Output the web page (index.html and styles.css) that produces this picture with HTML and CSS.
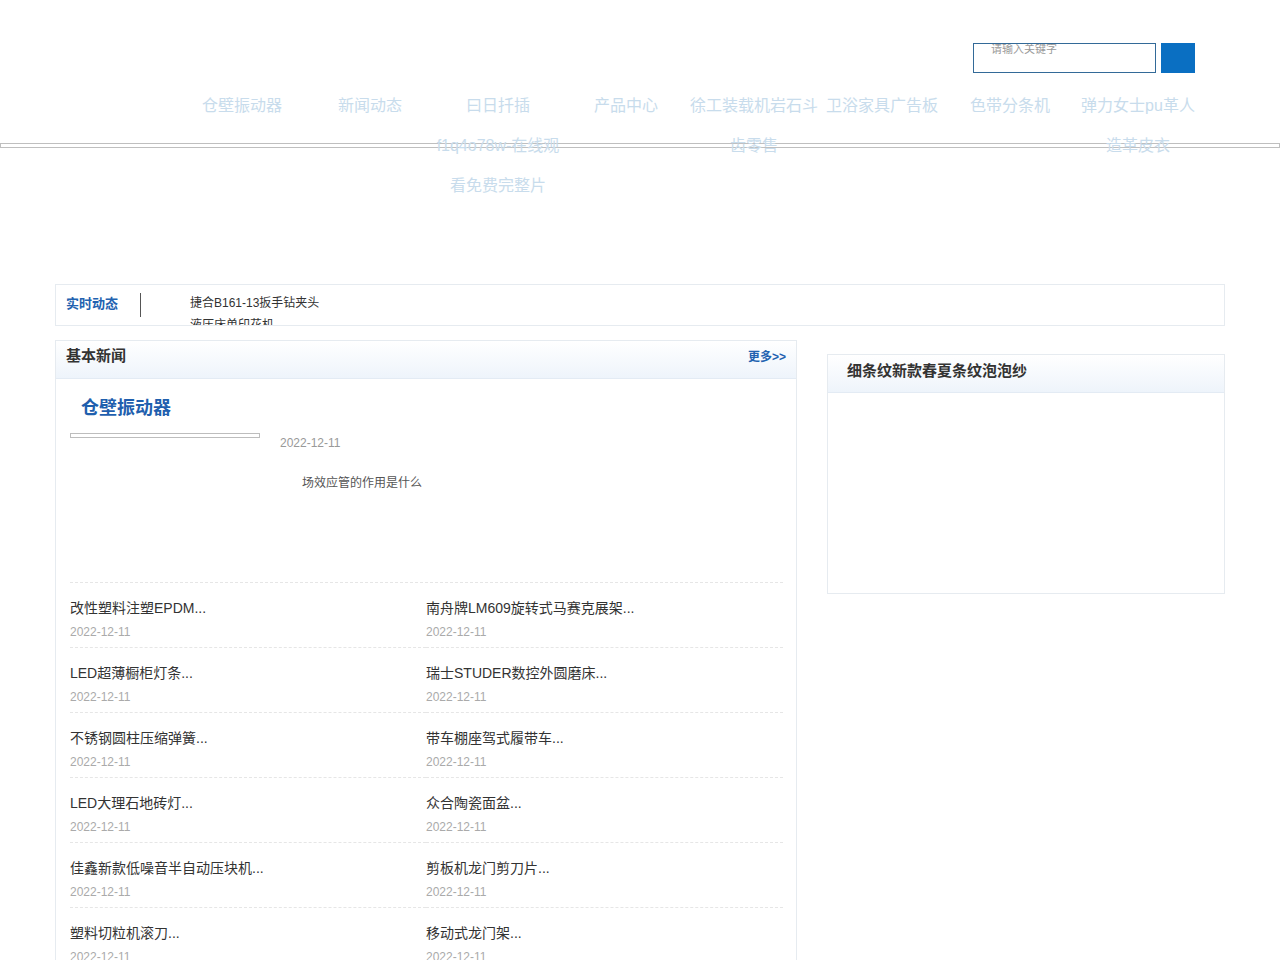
FILE: index.html
```html
<!DOCTYPE html>
<html lang="zh-CN">
<head>
<meta charset="UTF-8">
<title>仓壁振动器</title>
<link rel="stylesheet" href="styles.css">
</head>
<body>

<div class="header">
    <div class="wrap">
        <form class="search">
            <input type="text" class="search-input" placeholder="请输入关键字">
            <button type="button" class="search-btn"></button>
        </form>
        <ul class="nav">
            <li><a href="#">仓壁振动器</a></li>
            <li><a href="#">新闻动态</a></li>
            <li><a href="#">曰日扦插f1q4o78w-在线观看免费完整片</a></li>
            <li><a href="#">产品中心</a></li>
            <li><a href="#">徐工装载机岩石斗齿零售</a></li>
            <li><a href="#">卫浴家具广告板</a></li>
            <li><a href="#">色带分条机</a></li>
            <li><a href="#">弹力女士pu革人造革皮衣</a></li>
        </ul>
    </div>
</div>
<div class="line"></div>

<div class="wrap main">

    <div class="ticker">
        <div class="ticker-title">实时动态</div>
        <ul class="ticker-list">
            <li>捷合B161-13扳手钻夹头</li>
            <li>液压床单印花机</li>
        </ul>
    </div>

    <div class="columns">
        <div class="panel news">
            <div class="panel-head">
                <h3>基本新闻</h3>
                <a href="#" class="more">更多&gt;&gt;</a>
            </div>
            <div class="panel-body">
                <div class="feature">
                    <h2>仓壁振动器</h2>
                    <div class="feature-row">
                        <div class="feature-pic"></div>
                        <div class="feature-text">
                            <p class="date">2022-12-11</p>
                            <p class="desc">场效应管的作用是什么</p>
                        </div>
                    </div>
                </div>
                <ul class="news-list">
                    <li><a href="#">改性塑料注塑EPDM...</a><span>2022-12-11</span></li>
                    <li><a href="#">南舟牌LM609旋转式马赛克展架...</a><span>2022-12-11</span></li>
                    <li><a href="#">LED超薄橱柜灯条...</a><span>2022-12-11</span></li>
                    <li><a href="#">瑞士STUDER数控外圆磨床...</a><span>2022-12-11</span></li>
                    <li><a href="#">不锈钢圆柱压缩弹簧...</a><span>2022-12-11</span></li>
                    <li><a href="#">带车棚座驾式履带车...</a><span>2022-12-11</span></li>
                    <li><a href="#">LED大理石地砖灯...</a><span>2022-12-11</span></li>
                    <li><a href="#">众合陶瓷面盆...</a><span>2022-12-11</span></li>
                    <li><a href="#">佳鑫新款低噪音半自动压块机...</a><span>2022-12-11</span></li>
                    <li><a href="#">剪板机龙门剪刀片...</a><span>2022-12-11</span></li>
                    <li><a href="#">塑料切粒机滚刀...</a><span>2022-12-11</span></li>
                    <li><a href="#">移动式龙门架...</a><span>2022-12-11</span></li>
                </ul>
            </div>
        </div>

        <div class="panel side">
            <div class="panel-head">
                <h3>细条纹新款春夏条纹泡泡纱</h3>
            </div>
            <div class="side-body"></div>
        </div>
    </div>

</div>

</body>
</html>
```

FILE: styles.css
```css
body {
    margin: 0;
    padding: 0;
    font-family: "Liberation Sans", "Noto Sans CJK SC", sans-serif;
    color: #333;
    background: #fff;
}
ul, p, h2, h3 {
    margin: 0;
    padding: 0;
    list-style: none;
}
a {
    text-decoration: none;
    color: inherit;
}
.wrap {
    width: 1170px;
    margin: 0 auto;
}

/* header */
.header {
    height: 143px;
}
.header .wrap {
    padding-top: 43px;
}
.search {
    display: flex;
    justify-content: flex-end;
    margin: 0 30px 0 0;
}
.search-input {
    width: 183px;
    height: 30px;
    box-sizing: border-box;
    border: 1px solid #336a98;
    padding: 0 0 18px 17px;
    font-size: 11px;
    font-family: inherit;
    outline: none;
}
.search-input::placeholder {
    color: #9a9a9a;
}
.search-btn {
    width: 34px;
    height: 30px;
    margin-left: 5px;
    border: none;
    background: #0a6fc2;
    padding: 0;
}
.nav {
    display: flex;
    margin: 13px 0 0 123px;
}
.nav li {
    flex: 0 0 128px;
    text-align: center;
    font-size: 16px;
    line-height: 40px;
    color: #c8dcec;
}
.line {
    height: 3px;
    border: 1px solid #bfbfbf;
}

/* ticker */
.main {
    margin-top: 136px;
}
.ticker {
    display: flex;
    height: 40px;
    border: 1px solid #e6ebf0;
    overflow: hidden;
}
.ticker-title {
    margin: 8px 0 0 10px;
    width: 74px;
    height: 24px;
    line-height: 21px;
    border-right: 1px solid #555;
    font-size: 13px;
    font-weight: bold;
    color: #2262b0;
}
.ticker-list {
    margin-left: 49px;
    padding-top: 7px;
}
.ticker-list li {
    font-size: 12px;
    line-height: 22px;
    color: #333;
}

/* panels */
.columns {
    display: flex;
    align-items: flex-start;
    margin-top: 14px;
}
.panel {
    border: 1px solid #e6ebf0;
}
.panel-head {
    display: flex;
    justify-content: space-between;
    align-items: flex-start;
    height: 37px;
    border-bottom: 1px solid #e3ebf4;
    background: linear-gradient(#fff, #eef4fb);
}
.panel-head h3 {
    font-size: 15px;
    line-height: 30px;
    font-weight: bold;
    color: #333;
}
.news {
    width: 740px;
    height: 640px;
}
.news .panel-head {
    padding: 0 10px;
}
.more {
    font-size: 12px;
    line-height: 32px;
    font-weight: bold;
    color: #2262b0;
}
.panel-body {
    padding: 14px 13px 0 14px;
}
.feature {
    height: 189px;
    border-bottom: 1px dashed #e6e6e6;
}
.feature h2 {
    padding-left: 11px;
    font-size: 18px;
    line-height: 30px;
    color: #1f5fae;
}
.feature-row {
    display: flex;
    margin-top: 10px;
}
.feature-pic {
    width: 188px;
    height: 3px;
    border: 1px solid #bdbdbd;
}
.feature-text {
    margin-left: 20px;
    padding-top: 2px;
}
.date {
    font-size: 12px;
    line-height: 16px;
    color: #999;
}
.desc {
    margin-top: 24px;
    padding-left: 22px;
    font-size: 12px;
    line-height: 16px;
    color: #555;
}
.news-list {
    display: grid;
    grid-template-columns: 356px 357px;
}
.news-list li {
    padding: 15px 0 7px;
    border-bottom: 1px dashed #e6e6e6;
}
.news-list a {
    display: block;
    font-size: 14px;
    line-height: 20px;
    color: #333;
}
.news-list span {
    display: block;
    margin-top: 6px;
    font-size: 12px;
    line-height: 16px;
    color: #aaa;
}
.side {
    width: 396px;
    margin: 14px 0 0 30px;
}
.side .panel-head {
    padding-left: 19px;
}
.side .panel-head h3 {
    line-height: 32px;
}
.side-body {
    height: 200px;
}
```
